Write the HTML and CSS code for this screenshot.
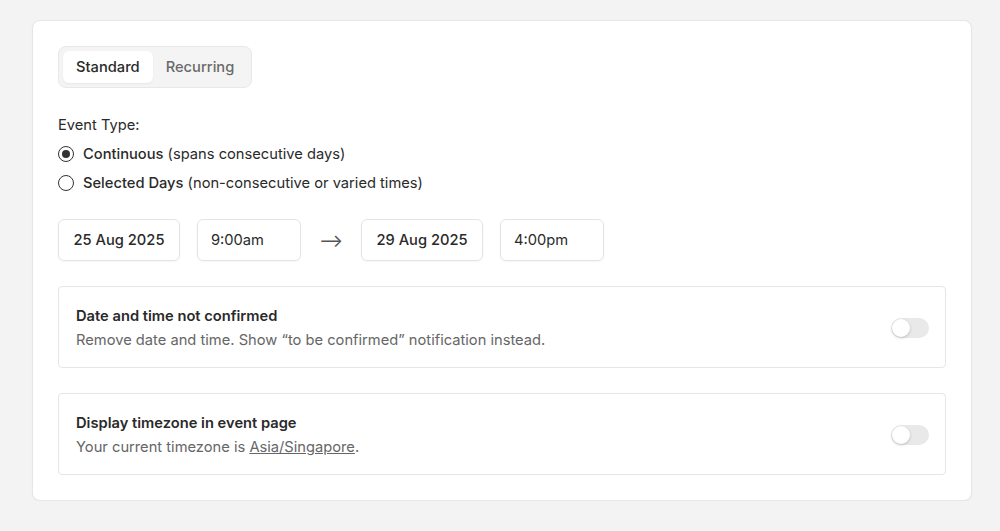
FILE: index.html
```html
<!DOCTYPE html>
<html>
<head>
  <title>Event Date</title>
  <link rel="stylesheet" href="styles.css">
</head>
<body>
  <div class="card">
    <div class="tabs">
      <button class="tab active">Standard</button>
      <button class="tab">Recurring</button>
    </div>

    <div class="field-label">Event Type:</div>
    <div class="radio-list">
      <label class="radio-row">
        <span class="radio checked"></span>
        <span><strong>Continuous</strong> (spans consecutive days)</span>
      </label>
      <label class="radio-row">
        <span class="radio"></span>
        <span><strong>Selected Days</strong> (non-consecutive or varied times)</span>
      </label>
    </div>

    <div class="range-row">
      <div class="input date-input">25 Aug 2025</div>
      <div class="input time-input">9:00am</div>
      <div class="arrow">&#10230;</div>
      <div class="input date-input">29 Aug 2025</div>
      <div class="input time-input">4:00pm</div>
    </div>

    <div class="option-box">
      <div class="option-text">
        <div class="option-title">Date and time not confirmed</div>
        <div class="option-desc">Remove date and time. Show &ldquo;to be confirmed&rdquo; notification instead.</div>
      </div>
      <span class="toggle"><span class="knob"></span></span>
    </div>

    <div class="option-box">
      <div class="option-text">
        <div class="option-title">Display timezone in event page</div>
        <div class="option-desc">Your current timezone is <a href="#">Asia/Singapore</a>.</div>
      </div>
      <span class="toggle"><span class="knob"></span></span>
    </div>
  </div>
</body>
</html>
```

FILE: styles.css
```css
body {
  margin: 0;
  padding: 20px 28px 0 32px;
  background-color: #f3f3f3;
  font-family: Inter, "Liberation Sans", Arial, sans-serif;
  font-size: 14.7px;
  color: #2a2a2a;
}
.card {
  width: 888px;
  padding: 25px;
  background-color: #fff;
  border: 1px solid #e6e6e6;
  border-radius: 8px;
  box-shadow: 0 1px 2px rgba(0,0,0,0.04);
}
.tabs {
  display: inline-flex;
  padding: 4px;
  background-color: #f4f4f4;
  border: 1px solid #e8e8e8;
  border-radius: 8px;
}
.tab {
  height: 32px;
  padding: 0 13px;
  border: none;
  border-radius: 6px;
  background: transparent;
  font-family: inherit;
  font-size: 14.7px;
  font-weight: 500;
  color: #6a6a6a;
  cursor: pointer;
}
.tab.active {
  background-color: #fff;
  color: #2a2a2a;
  box-shadow: 0 1px 2px rgba(0,0,0,0.06);
}
.field-label {
  margin-top: 26px;
  line-height: 22px;
  color: #2a2a2a;
}
.radio-list {
  margin-top: 7px;
  display: flex;
  flex-direction: column;
  gap: 7px;
}
.radio-row {
  display: flex;
  align-items: center;
  gap: 9px;
  line-height: 22px;
  color: #2a2a2a;
}
.radio-row strong {
  font-weight: 500;
}
.radio {
  width: 14px;
  height: 14px;
  border: 1.5px solid #333;
  border-radius: 50%;
  position: relative;
  flex-shrink: 0;
}
.radio.checked::after {
  content: "";
  position: absolute;
  top: 3px;
  left: 3px;
  width: 8px;
  height: 8px;
  border-radius: 50%;
  background-color: #333;
}
.range-row {
  margin-top: 25px;
  display: flex;
  align-items: center;
  gap: 17px;
}
.input {
  height: 40px;
  display: flex;
  align-items: center;
  border: 1px solid #e4e4e4;
  border-radius: 6px;
  box-shadow: 0 1px 2px rgba(0,0,0,0.04);
  color: #2a2a2a;
  box-sizing: content-box;
}
.date-input {
  width: 120px;
  justify-content: center;
  font-weight: 500;
}
.time-input {
  width: 89px;
  padding-left: 13px;
}
.arrow {
  width: 26px;
  text-align: center;
  font-size: 18px;
  color: #555;
}
.option-box {
  margin-top: 25px;
  height: 80px;
  padding: 0 16px 0 17px;
  display: flex;
  align-items: center;
  justify-content: space-between;
  border: 1px solid #e6e6e6;
  border-radius: 4px;
}
.option-text {
  margin-top: 2px;
}
.option-title {
  font-weight: 600;
  line-height: 24px;
  color: #2a2a2a;
}
.option-desc {
  line-height: 24px;
  color: #666;
}
.option-desc a {
  color: #666;
}
.toggle {
  width: 38px;
  height: 20px;
  border-radius: 10px;
  background-color: #e9e9e9;
  position: relative;
  margin-top: 2px;
}
.knob {
  position: absolute;
  top: 1px;
  left: 1px;
  width: 18px;
  height: 18px;
  border-radius: 50%;
  background-color: #fff;
  box-shadow: 0 1px 3px rgba(0,0,0,0.2);
}
```
